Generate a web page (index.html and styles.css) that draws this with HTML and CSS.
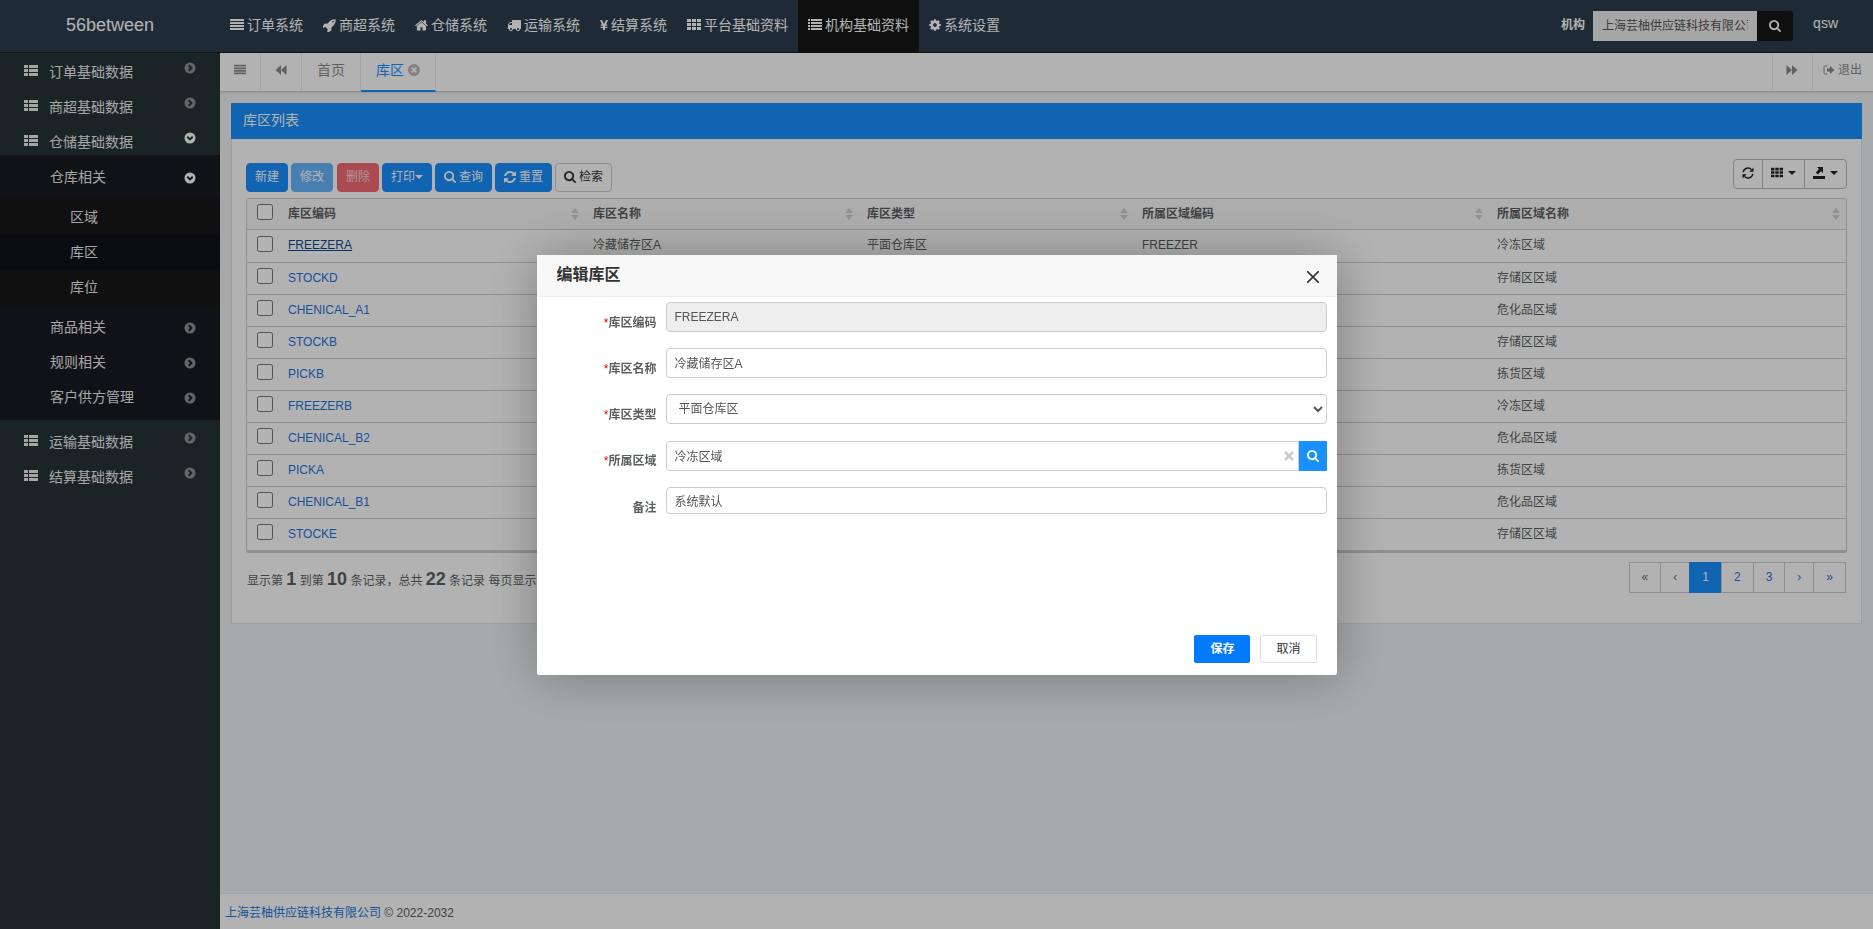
FILE: index.html
```html
<!DOCTYPE html>
<html lang="zh-CN">
<head>
<meta charset="utf-8">
<title>库区</title>
<link rel="stylesheet" href="styles.css">
</head>
<body>
<svg class="sprite" aria-hidden="true">
  <symbol id="i-justify" viewBox="0 0 14 12"><path d="M0 0h14v2H0zM0 3h14v2H0zM0 6h14v2H0zM0 9h14v2H0z"/></symbol>
  <symbol id="i-rocket" viewBox="100 100 1600 1600"><path d="M1440 448q0-40-28-68t-68-28-68 28-28 68 28 68 68 28 68-28 28-68zm224-288q0 249-75.5 430.5t-253.5 360.5q-81 80-195 176l-20 379q-2 16-16 26l-384 224q-7 4-16 4-12 0-23-9l-64-64q-13-14-8-32l85-276-281-281-276 85q-3 1-9 1-14 0-23-9l-64-64q-17-19-5-39l224-384q10-14 26-16l379-20q96-114 176-195 188-187 358-258t431-71q14 0 24 9.5t10 22.5z"/></symbol>
  <symbol id="i-home" viewBox="80 100 1640 1640"><path d="M1472 992v480q0 26-19 45t-45 19h-384v-384h-256v384h-384q-26 0-45-19t-19-45v-480q0-1 .5-3t.5-3l575-474 575 474q1 2 1 6zm223-69l-62 74q-8 9-21 11h-3q-13 0-21-7l-692-577-692 577q-12 8-24 7-13-2-21-11l-62-74q-8-10-7-23.5t11-21.5l719-599q32-26 76-26t76 26l244 204v-195q0-14 9-23t23-9h192q14 0 23 9t9 23v408l219 182q10 8 11 21.5t-7 23.5z"/></symbol>
  <symbol id="i-truck" viewBox="0 0 1792 1792"><path d="M640 1408q0-52-38-90t-90-38-90 38-38 90 38 90 90 38 90-38 38-90zm-384-512h384v-256h-158q-13 0-22 9l-195 195q-9 9-9 22v30zm1280 512q0-52-38-90t-90-38-90 38-38 90 38 90 90 38 90-38 38-90zm256-1088v1024q0 15-4 26.500t-13.500 18.500-16.500 11.500-23.500 6-22.500 2-25.500 0-22.500-.5q0 106-75 181t-181 75-181-75-75-181h-384q0 106-75 181t-181 75-181-75-75-181h-64q-3 0-22.500.5t-25.500 0-22.500-2-23.500-6-16.500-11.500-13.500-18.500-4-26.500q0-26 19-45t45-19v-320q0-8-.5-35t0-38 2.500-34.500 6.500-37 14-30.500 22.500-30l198-198q19-19 50.500-32t58.500-13h160v-192q0-26 19-45t45-19h1024q26 0 45 19t19 45z"/></symbol>
  <symbol id="i-yen" viewBox="0 0 8 12"><path d="M0 1h2l2 4 2-4h2L6 5.500h1.300v1.200H5v1h2.300v1.200H5V11H3V8.900H.7V7.700H3v-1H.7V5.500H2z"/></symbol>
  <symbol id="i-th" viewBox="0 0 14 12"><path d="M0 0h4v3H0zM5 0h4v3H5zM10 0h4v3h-4zM0 4h4v3H0zM5 4h4v3H5zM10 4h4v3h-4zM0 8h4v3H0zM5 8h4v3H5zM10 8h4v3h-4z"/></symbol>
  <symbol id="i-list" viewBox="0 0 14 12"><path d="M0 0h2v2H0zM3 0h11v2H3zM0 3h2v2H0zM3 3h11v2H3zM0 6h2v2H0zM3 6h11v2H3zM0 9h2v2H0zM3 9h11v2H3z"/></symbol>
  <symbol id="i-thlist" viewBox="0 0 14 12"><path d="M0 0h4v3H0zM5 0h9v3H5zM0 4h4v3H0zM5 4h9v3H5zM0 8h4v3H0zM5 8h9v3H5z"/></symbol>
  <symbol id="i-cog" viewBox="100 100 1592 1592"><path d="M1152 896q0-106-75-181t-181-75-181 75-75 181 75 181 181 75 181-75 75-181zm512-109v222q0 12-8 23t-20 13l-185 28q-19 54-39 91 35 50 107 138 10 12 10 25t-9 23q-27 37-99 108t-94 71q-12 0-26-9l-138-108q-44 23-91 38-16 136-29 186-7 28-36 28h-222q-14 0-24.500-8.500t-11.500-21.500l-28-184q-49-16-90-37l-141 107q-10 9-25 9-14 0-25-11-126-114-165-168-7-10-7-23 0-12 8-23 15-21 51-66.500t54-70.500q-27-50-41-99l-183-27q-13-2-21-12.500t-8-23.500v-222q0-12 8-23t19-13l186-28q14-46 39-92-40-57-107-138-10-12-10-24 0-10 9-23 26-36 98.500-107.500t94.500-71.500q13 0 26 10l138 107q44-23 91-38 16-136 29-186 7-28 36-28h222q14 0 24.500 8.500t11.500 21.500l28 184q49 16 90 37l142-107q9-9 24-9 13 0 25 10 129 119 165 170 7 8 7 22 0 12-8 23-15 21-51 66.500t-54 70.500q26 50 41 98l183 28q13 2 21 12.500t8 23.500z"/></symbol>
  <symbol id="i-search" viewBox="64 128 1664 1664"><path d="M1216 832q0-185-131.500-316.500t-316.500-131.500-316.500 131.500-131.500 316.500 131.500 316.500 316.500 131.500 316.500-131.500 131.500-316.500zm512 832q0 52-38 90t-90 38q-54 0-90-38l-343-342q-179 124-399 124-143 0-273.500-55.500t-225-150-150-225-55.500-273.500 55.500-273.500 150-225 225-150 273.500-55.500 273.500 55.500 225 150 150 225 55.500 273.500q0 220-124 399l343 343q37 37 37 90z"/></symbol>
  <symbol id="i-refresh" viewBox="128 128 1536 1536"><path d="M1639 1056q0 5-1 7-64 268-268 434.500t-478 166.500q-146 0-282.500-55t-243.500-157l-129 129q-19 19-45 19t-45-19-19-45v-448q0-26 19-45t45-19h448q26 0 45 19t19 45-19 45l-137 137q71 66 161 102t187 36q134 0 250-65t186-179q11-17 53-117 8-23 30-23h192q13 0 22.500 9.500t9.500 22.500zm25-800v448q0 26-19 45t-45 19h-448q-26 0-45-19t-19-45 19-45l138-138q-148-137-349-137-134 0-250 65t-186 179q-11 17-53 117-8 23-30 23h-199q-13 0-22.500-9.500t-9.500-22.500v-7q65-268 270-434.500t480-166.500q146 0 284 55.500t245 156.500l130-129q19-19 45-19t45 19 19 45z"/></symbol>
  <symbol id="i-reload" viewBox="0 0 12 12"><path d="M1.200 5.200A4.800 4.800 0 0 1 9.500 2.600M10.800 6.800A4.800 4.800 0 0 1 2.500 9.400" fill="none" stroke="currentColor" stroke-width="1.400"/><path d="M11.500.5v4.200H7.300zM.5 11.500V7.300h4.200z"/></symbol>
  <symbol id="i-export" viewBox="0 0 12 12"><path d="M0 9h12v3H0zM4 0h6v6L8 4.200 4.800 7.600 2.800 5.600 6 2z"/></symbol>
  <symbol id="i-right" viewBox="0 0 12 12"><path fill-rule="evenodd" d="M6 .5a5.500 5.500 0 1 1 0 11 5.500 5.500 0 0 1 0-11zM4 4l2 2-2 2 1.400 1.400L8.800 6 5.400 2.600z"/></symbol>
  <symbol id="i-down" viewBox="0 0 12 12"><path fill-rule="evenodd" d="M6 .5a5.500 5.500 0 1 1 0 11 5.500 5.500 0 0 1 0-11zM4 4L2.600 5.400 6 8.800l3.400-3.400L8 4 6 6z"/></symbol>
  <symbol id="i-closed" viewBox="0 0 12 12"><path fill-rule="evenodd" d="M6 0a6 6 0 1 1 0 12A6 6 0 0 1 6 0zM4.200 3L3 4.200 4.800 6 3 7.800 4.200 9 6 7.200 7.800 9 9 7.800 7.200 6 9 4.200 7.800 3 6 4.800z"/></symbol>
  <symbol id="i-back" viewBox="0 0 12 12"><path d="M6 1v10L.5 6zM11.500 1v10L6 6z"/></symbol>
  <symbol id="i-forward" viewBox="0 0 12 12"><path d="M6 1v10l5.500-5zM.5 1v10L6 6z"/></symbol>
  <symbol id="i-signout" viewBox="0 0 12 12"><path d="M4.500 2H2.200Q1 2 1 3.200v5.600Q1 10 2.200 10h2.300" fill="none" stroke="currentColor"/><path d="M4 4.500h3V2l4.500 4L7 10V7.500H4z"/></symbol>
  <symbol id="i-caret" viewBox="0 0 8 4"><path d="M0 0h8L4 4z"/></symbol>
  <symbol id="i-sort" viewBox="0 0 8 12"><path d="M4 0l4 5H0zM4 12l4-5H0z"/></symbol>
  <symbol id="i-x" viewBox="0 0 12 12"><path d="M0 0l12 12M12 0L0 12" fill="none" stroke="currentColor" stroke-width="1.600"/></symbol>
  <symbol id="i-xbold" viewBox="0 0 10 10"><path d="M1 1l8 8M9 1L1 9" fill="none" stroke="currentColor" stroke-width="2.600"/></symbol>
</svg>

<div class="app">
  <header class="top">
    <a class="logo" href="#">56between</a>
    <nav class="systems">
      <a href="#"><svg class="w14"><use href="#i-justify"/></svg>订单系统</a>
      <a href="#"><svg class="w13"><use href="#i-rocket"/></svg>商超系统</a>
      <a href="#"><svg class="w13"><use href="#i-home"/></svg>仓储系统</a>
      <a href="#"><svg class="w14 tall"><use href="#i-truck"/></svg>运输系统</a>
      <a href="#"><svg class="w8"><use href="#i-yen"/></svg>结算系统</a>
      <a href="#"><svg class="w14"><use href="#i-th"/></svg>平台基础资料</a>
      <a href="#" class="active"><svg class="w14"><use href="#i-list"/></svg>机构基础资料</a>
      <a href="#"><svg class="w12"><use href="#i-cog"/></svg>系统设置</a>
    </nav>
    <form class="org">
      <label for="org">机构</label>
      <input id="org" type="text" value="上海芸柚供应链科技有限公司" readonly>
      <button type="button" aria-label="搜索机构"><svg class="w12"><use href="#i-search"/></svg></button>
    </form>
    <a class="user" href="#">qsw</a>
  </header>

  <aside class="side">
    <ul class="menu">
      <li><a class="l1" href="#"><svg class="w14"><use href="#i-thlist"/></svg><span>订单基础数据</span><svg class="w12 arrow"><use href="#i-right"/></svg></a></li>
      <li><a class="l1" href="#"><svg class="w14"><use href="#i-thlist"/></svg><span>商超基础数据</span><svg class="w12 arrow"><use href="#i-right"/></svg></a></li>
      <li><a class="l1 open" href="#"><svg class="w14"><use href="#i-thlist"/></svg><span>仓储基础数据</span><svg class="w12 arrow"><use href="#i-down"/></svg></a>
        <ul class="sub">
          <li><a class="l2 open" href="#"><span>仓库相关</span><svg class="w12 arrow"><use href="#i-down"/></svg></a>
            <ul class="leaf">
              <li><a class="l3" href="#"><span>区域</span></a></li>
              <li><a class="l3 current" href="#"><span>库区</span></a></li>
              <li><a class="l3" href="#"><span>库位</span></a></li>
            </ul>
          </li>
          <li><a class="l2" href="#"><span>商品相关</span><svg class="w12 arrow"><use href="#i-right"/></svg></a></li>
          <li><a class="l2" href="#"><span>规则相关</span><svg class="w12 arrow"><use href="#i-right"/></svg></a></li>
          <li><a class="l2" href="#"><span>客户供方管理</span><svg class="w12 arrow"><use href="#i-right"/></svg></a></li>
        </ul>
      </li>
      <li><a class="l1" href="#"><svg class="w14"><use href="#i-thlist"/></svg><span>运输基础数据</span><svg class="w12 arrow"><use href="#i-right"/></svg></a></li>
      <li><a class="l1" href="#"><svg class="w14"><use href="#i-thlist"/></svg><span>结算基础数据</span><svg class="w12 arrow"><use href="#i-right"/></svg></a></li>
    </ul>
  </aside>

  <main class="main">
    <div class="tabs">
      <button class="tool" type="button" aria-label="菜单"><svg class="w12"><use href="#i-justify"/></svg></button>
      <button class="tool" type="button" aria-label="左移"><svg class="w12"><use href="#i-back"/></svg></button>
      <a class="tab" href="#">首页</a>
      <a class="tab selected" href="#">库区<svg class="w12"><use href="#i-closed"/></svg></a>
      <button class="tool end" type="button" aria-label="右移"><svg class="w12"><use href="#i-forward"/></svg></button>
      <a class="logout" href="#"><svg class="w12"><use href="#i-signout"/></svg>退出</a>
    </div>

    <section class="panel">
      <h2>库区列表</h2>
      <div class="panel-body">
        <div class="toolbar">
          <button class="btn" type="button">新建</button>
          <button class="btn" type="button" disabled>修改</button>
          <button class="btn danger" type="button" disabled>删除</button>
          <button class="btn" type="button">打印<svg class="caret"><use href="#i-caret"/></svg></button>
          <button class="btn icon" type="button"><svg class="w12"><use href="#i-search"/></svg>查询</button>
          <button class="btn icon" type="button"><svg class="w12"><use href="#i-refresh"/></svg>重置</button>
          <button class="btn icon plain" type="button"><svg class="w12"><use href="#i-search"/></svg>检索</button>
          <div class="group">
            <button type="button" aria-label="刷新"><svg class="w12"><use href="#i-reload"/></svg></button>
            <button type="button" aria-label="列"><svg class="w12"><use href="#i-th"/></svg><svg class="caret"><use href="#i-caret"/></svg></button>
            <button type="button" aria-label="导出"><svg class="w12"><use href="#i-export"/></svg><svg class="caret"><use href="#i-caret"/></svg></button>
          </div>
        </div>

        <table class="grid">
          <colgroup><col class="c-check"><col class="c-code"><col class="c-name"><col class="c-type"><col class="c-area"><col></colgroup>
          <thead>
            <tr>
              <th><input type="checkbox" aria-label="全选"></th>
              <th><div class="th">库区编码<svg><use href="#i-sort"/></svg></div></th>
              <th><div class="th">库区名称<svg><use href="#i-sort"/></svg></div></th>
              <th><div class="th">库区类型<svg><use href="#i-sort"/></svg></div></th>
              <th><div class="th">所属区域编码<svg><use href="#i-sort"/></svg></div></th>
              <th><div class="th">所属区域名称<svg><use href="#i-sort"/></svg></div></th>
            </tr>
          </thead>
          <tbody>
            <tr><td><input type="checkbox" aria-label="FREEZERA"></td><td><a class="focus" href="#">FREEZERA</a></td><td>冷藏储存区A</td><td>平面仓库区</td><td>FREEZER</td><td>冷冻区域</td></tr>
            <tr><td><input type="checkbox" aria-label="STOCKD"></td><td><a href="#">STOCKD</a></td><td></td><td></td><td></td><td>存储区区域</td></tr>
            <tr><td><input type="checkbox" aria-label="CHENICAL_A1"></td><td><a href="#">CHENICAL_A1</a></td><td></td><td></td><td></td><td>危化品区域</td></tr>
            <tr><td><input type="checkbox" aria-label="STOCKB"></td><td><a href="#">STOCKB</a></td><td></td><td></td><td></td><td>存储区区域</td></tr>
            <tr><td><input type="checkbox" aria-label="PICKB"></td><td><a href="#">PICKB</a></td><td></td><td></td><td></td><td>拣货区域</td></tr>
            <tr><td><input type="checkbox" aria-label="FREEZERB"></td><td><a href="#">FREEZERB</a></td><td></td><td></td><td></td><td>冷冻区域</td></tr>
            <tr><td><input type="checkbox" aria-label="CHENICAL_B2"></td><td><a href="#">CHENICAL_B2</a></td><td></td><td></td><td></td><td>危化品区域</td></tr>
            <tr><td><input type="checkbox" aria-label="PICKA"></td><td><a href="#">PICKA</a></td><td></td><td></td><td></td><td>拣货区域</td></tr>
            <tr><td><input type="checkbox" aria-label="CHENICAL_B1"></td><td><a href="#">CHENICAL_B1</a></td><td></td><td></td><td></td><td>危化品区域</td></tr>
            <tr><td><input type="checkbox" aria-label="STOCKE"></td><td><a href="#">STOCKE</a></td><td></td><td></td><td></td><td>存储区区域</td></tr>
          </tbody>
        </table>

        <div class="foot">
          <p>显示第 <b>1</b> 到第 <b>10</b> 条记录，总共 <b>22</b> 条记录 每页显示</p>
          <nav class="pages" aria-label="分页">
            <a class="off" href="#">«</a><a class="off" href="#">‹</a><a class="on" href="#">1</a><a href="#">2</a><a href="#">3</a><a href="#">›</a><a href="#">»</a>
          </nav>
        </div>
      </div>
    </section>

    <footer class="copy"><a href="#">上海芸柚供应链科技有限公司</a> © 2022-2032</footer>
  </main>
</div>

<div class="shade">
  <div class="dialog" role="dialog" aria-labelledby="dlg-title">
    <div class="dialog-head">
      <h3 id="dlg-title">编辑库区</h3>
      <button type="button" aria-label="关闭"><svg class="w12"><use href="#i-x"/></svg></button>
    </div>
    <form class="dialog-body">
      <label for="f-code"><i>*</i>库区编码</label>
      <input id="f-code" type="text" value="FREEZERA" readonly>
      <label for="f-name"><i>*</i>库区名称</label>
      <input id="f-name" type="text" value="冷藏储存区A">
      <label for="f-type"><i>*</i>库区类型</label>
      <select id="f-type"><option>平面仓库区</option></select>
      <label for="f-area"><i>*</i>所属区域</label>
      <div class="lookup">
        <input id="f-area" type="text" value="冷冻区域">
        <button class="clear" type="button" aria-label="清除"><svg><use href="#i-xbold"/></svg></button>
        <button class="find" type="button" aria-label="选择"><svg class="w12"><use href="#i-search"/></svg></button>
      </div>
      <label for="f-note">备注</label>
      <input id="f-note" class="short" type="text" value="系统默认">
    </form>
    <div class="dialog-foot">
      <button class="save" type="button">保存</button>
      <button type="button">取消</button>
    </div>
  </div>
</div>
</body>
</html>
```
FILE: styles.css
```css
* { box-sizing: border-box; }

body {
  margin: 0;
  font: 12px/18px "Liberation Sans", "Noto Sans CJK SC", sans-serif;
  color: #5c5f61;
}

a { color: #1f74dc; text-decoration: none; }
button, input, select { font: inherit; color: inherit; }
button { cursor: pointer; }
ul { list-style: none; margin: 0; padding: 0; }

svg { flex: none; height: 12px; fill: currentColor; display: block; }
.sprite { position: absolute; width: 0; height: 0; }
.w8 { width: 8px; }
.w12 { width: 12px; }
.w13 { width: 13px; height: 13px; }
.w14 { width: 14px; }
.tall { height: 14px; }
.caret { width: 8px; height: 4px; }

.app {
  display: grid;
  grid-template: auto 1fr / 220px 1fr;
  min-height: 100vh;
}

/* top bar */
.top {
  grid-column: 1 / -1;
  position: relative;
  z-index: 1;
  display: flex;
  height: 53px;
  background: #2c3e50;
  border-bottom: 1px solid #151d26;
  line-height: 50px;
}
.top a { color: #fff; }
.logo { width: 220px; font-size: 18px; text-align: center; }
.systems { display: flex; flex: 1; font-size: 14px; }
.systems a { display: flex; align-items: center; gap: 3px; padding: 0 10px 2px; white-space: nowrap; }
.systems .active { background: #161616; }
.org { display: flex; align-items: center; color: #fff; }
.org label { font-weight: bold; margin-right: 8px; padding-bottom: 2px; }
.org input {
  width: 164px;
  height: 30px;
  padding: 0 9px;
  border: 0;
  background: #eee;
  color: #555;
}
.org button {
  display: grid;
  place-items: center;
  width: 36px;
  height: 30px;
  padding: 0;
  border: 0;
  border-radius: 0 3px 3px 0;
  background: #161616;
}
.user { padding: 0 35px 0 20px; font-size: 14px; line-height: 46px; }

/* side menu */
.side {
  margin-top: -3px;
  background: #263438;
  font-size: 14px;
}
.side a { display: flex; align-items: center; height: 35px; color: #ededed; padding-right: 24px; }
.side .arrow { margin-left: auto; color: #8d9396; }
.side .open .arrow { color: #fff; }
.l1 { padding-left: 24px; }
.l1 svg:first-child { margin: 6px 11px 0 0; }
.l1 span { padding-top: 8px; }
.l2 span, .l3 span { padding-bottom: 2px; }
.sub { padding: 5px 0; background: #181b21; }
.side .l2 { padding-left: 50px; }
.leaf { padding: 5px 0; background: #171717; }
.side .l3 { padding-left: 70px; }
.side .l3.current { background: #101217; }

/* main area */
.main { display: flex; flex-direction: column; min-width: 0; background: #f0f2f5; }
.tabs {
  display: flex;
  height: 39px;
  background: #fff;
  border-bottom: 1px solid #d0d0d0;
  box-shadow: 0 1px 2px rgba(0, 0, 0, .1);
  color: #8c8c8c;
}
.tool {
  display: grid;
  place-items: center;
  width: 41px;
  padding: 0 0 4px;
  border: 0;
  border-right: 1px solid #eaeaea;
  background: none;
}
.tool.end { width: 41px; margin-left: auto; border-left: 1px solid #eaeaea; }
.tab {
  display: flex;
  align-items: center;
  gap: 4px;
  padding: 0 15px 4px;
  border-right: 1px solid #eaeaea;
  font-size: 14px;
  color: #8c8c8c;
}
.tab svg { color: #bbb; }
.tab.selected { margin-bottom: -1px; border-bottom: 2px solid #1890ff; color: #1890ff; }
.logout { display: flex; align-items: center; gap: 3px; padding: 0 11px 4px 10px; color: #8c8c8c; }

.panel { margin: 11px 11px 0; border: 1px solid #e0e3e6; border-top: 0; background: #fff; }
.panel h2 {
  margin: 0 -1px;
  padding: 0 12px 2px;
  background: #1890ff;
  color: #fff;
  font-size: 14px;
  font-weight: normal;
  line-height: 34px;
}
.panel-body { padding: 20px 14px 30px; }
.toolbar { display: flex; align-items: end; gap: 3px; margin-bottom: 5px; padding-bottom: 1px; }
.btn {
  display: flex;
  align-items: center;
  height: 29px;
  padding: 0 8px 2px;
  border: 1px solid #1890ff;
  border-radius: 4px;
  background: #1890ff;
  color: #fff;
}
.btn.icon { gap: 3px; }
.btn:disabled { opacity: .65; }
.btn.danger:disabled { margin-left: 1px; opacity: 1; color: #fbd5d8; background: #f76b75; border-color: #f76b75; }
.btn.plain { background: #fff; border-color: #ccc; color: #333; }
.group { display: flex; margin: 0 0 3px auto; border: 1px solid #bbb; border-radius: 4px; }
.group button {
  display: flex;
  align-items: center;
  gap: 5px;
  height: 28px;
  padding: 0 8px 2px;
  border: 0;
  background: none;
  color: #222;
}
.group button + button { border-left: 1px solid #bbb; }

.grid {
  width: 100%;
  table-layout: fixed;
  border: 1px solid #ccc;
  border-bottom-width: 2px;
  border-spacing: 0;
  border-radius: 3px;
}
.c-check { width: 33px; }
.c-code { width: 305px; }
.c-name { width: 274px; }
.c-type { width: 275px; }
.c-area { width: 355px; }
.grid th, .grid td { height: 32px; padding: 0 8px 2px; text-align: left; border-bottom: 1px solid #d0d0d0; }
.grid th { height: 31px; padding: 0 6px 0 8px; background: #f8f8fa; }
.grid th:first-child, .grid td:first-child { padding: 0 0 5px 10px; }
.grid input { display: block; width: 16px; height: 16px; margin: 0; }
.grid tr:first-child td { height: 33px; }
.th { display: flex; justify-content: space-between; align-items: center; }
.th svg { width: 8px; color: #d0d0d0; }
.grid .focus { color: #0d4a8f; text-decoration: underline; }

.foot { display: flex; justify-content: space-between; padding-top: 9px; }
.foot p { margin: 0; padding: 5px 0 0 1px; line-height: 24px; }
.foot b { font-size: 18px; }
.pages { display: flex; padding-right: 1px; }
.pages a { margin-left: -1px; padding: 5px 12px 6px; border: 1px solid #ccc; line-height: 18px; }
.pages .off { color: #676a6c; }
.pages .on { background: #1890ff; border-color: #1890ff; color: #fff; }

.copy { margin-top: auto; padding: 10px 5px 7px; border-top: 1px solid #e7eaec; background: #fff; }

/* dialog */
.shade {
  position: fixed;
  inset: 0;
  z-index: 10;
  display: grid;
  place-items: center;
  background: rgba(0, 0, 0, .3);
}
.dialog {
  display: flex;
  flex-direction: column;
  width: 800px;
  min-height: 420px;
  border-radius: 2px;
  background: #fff;
  box-shadow: 1px 1px 50px rgba(0, 0, 0, .3);
}
.dialog-head {
  display: flex;
  align-items: center;
  justify-content: space-between;
  height: 42px;
  padding: 0 18px 0 20px;
  border-bottom: 1px solid #eee;
  background: #f8f8f8;
  color: #333;
}
.dialog-head h3 { margin: 0; font-size: 16px; font-weight: 600; }
.dialog-head button { padding: 4px 0 0; border: 0; background: none; }
.dialog-body {
  display: grid;
  grid-template-columns: 110px 1fr;
  gap: 16px 9px;
  padding: 5px 10px;
}
.dialog-body label { padding-top: 12px; text-align: right; font-weight: bold; line-height: 18px; }
.dialog-body i { color: #e00; font-style: normal; font-weight: normal; }
.dialog-body input, .dialog-body select {
  width: 100%;
  height: 30px;
  padding: 0 8px;
  border: 1px solid #ccc;
  border-radius: 4px;
  background: #fff;
  color: #555;
}
.dialog-body input:read-only { background: #eee; }
.dialog-body .short { height: 27px; }
.lookup { position: relative; display: flex; padding-top: 1px; }
.lookup input { border-radius: 4px 0 0 4px; }
.lookup button { display: grid; place-items: center; padding: 0; border: 0; }
.clear { position: absolute; right: 28px; top: 2px; width: 20px; height: 28px; background: none; color: #ccc; }
.clear svg { width: 10px; height: 10px; }
.find { flex: none; width: 28px; background: #1890ff; color: #fff; }
.dialog-foot { display: flex; justify-content: end; gap: 10px; margin-top: auto; padding: 0 20px 12px; }
.dialog-foot button {
  height: 28px;
  padding: 0 15px;
  border: 1px solid #dedede;
  border-radius: 2px;
  background: #fff;
  color: #333;
}
.dialog-foot .save { background: #007bff; border-color: #007bff; color: #fff; font-weight: bold; }
```
